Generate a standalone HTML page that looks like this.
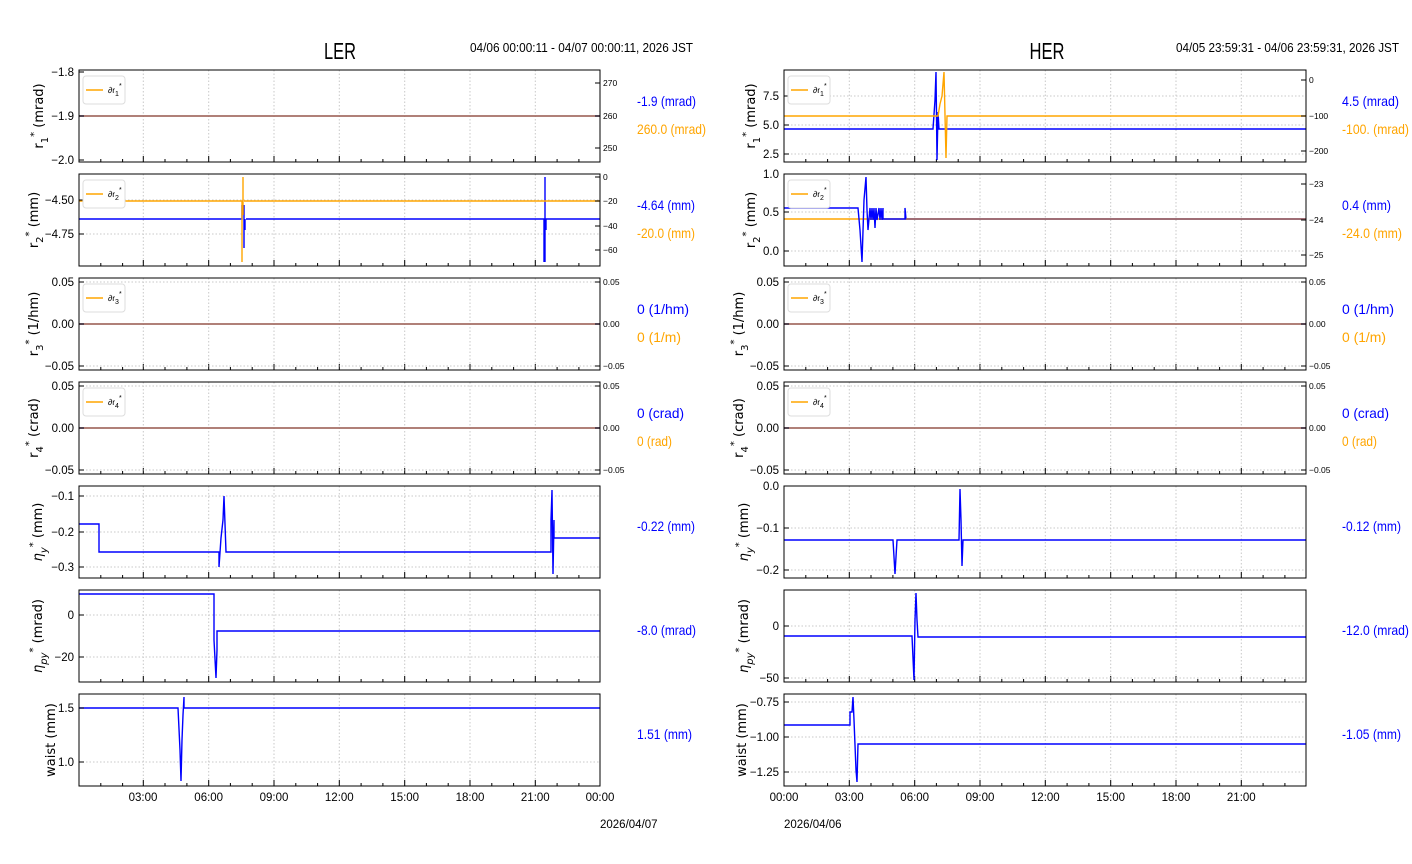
<!DOCTYPE html>
<html><head><meta charset="utf-8"><style>
body{margin:0;background:#fff;width:1412px;height:864px;overflow:hidden}
svg{display:block}
text{font-family:"Liberation Sans",sans-serif;fill:#000}
.t{font-size:11.5px}
.s{font-size:8.5px}
.yl{font-family:"DejaVu Sans","Liberation Sans",sans-serif;font-size:13px}
.v{font-size:14px}
.b{fill:#0000ff}.o{fill:#ffa500}
.gr{stroke:#c8c8c8;stroke-width:1;stroke-dasharray:1.5,2;fill:none}
.fr{fill:none;stroke:#000;stroke-width:1}
.bl{fill:none;stroke:#0000ff;stroke-width:1.4}
.or{fill:none;stroke:#ffa500;stroke-width:1.4}
</style></head><body>
<svg width="1412" height="864" viewBox="0 0 1412 864">
<defs>
<g id="gL">
<path class="gr" d="M143.3 0V92M208.7 0V92M274 0V92M339.3 0V92M404.7 0V92M470 0V92M535.3 0V92"/>
<path stroke="#000" d="M143.3 92v-6M208.7 92v-6M274 92v-6M339.3 92v-6M404.7 92v-6M470 92v-6M535.3 92v-6M100.8 92v-3M122.6 92v-3M165 92v-3M186.9 92v-3M230.4 92v-3M252.2 92v-3M295.8 92v-3M317.6 92v-3M361.1 92v-3M382.9 92v-3M426.4 92v-3M448.2 92v-3M491.8 92v-3M513.6 92v-3M557.1 92v-3M578.9 92v-3"/>
</g>
<g id="gR">
<path class="gr" d="M849.3 0V92M914.7 0V92M980 0V92M1045.3 0V92M1110.7 0V92M1176 0V92M1241.3 0V92"/>
<path stroke="#000" d="M849.3 92v-6M914.7 92v-6M980 92v-6M1045.3 92v-6M1110.7 92v-6M1176 92v-6M1241.3 92v-6M805.8 92v-3M827.6 92v-3M871 92v-3M892.9 92v-3M936.4 92v-3M958.2 92v-3M1001.8 92v-3M1023.6 92v-3M1067.1 92v-3M1088.9 92v-3M1132.4 92v-3M1154.2 92v-3M1197.8 92v-3M1219.6 92v-3M1263.1 92v-3M1284.9 92v-3"/>
</g>
</defs>

<text x="340" y="59" text-anchor="middle" style="font-size:23px" textLength="32" lengthAdjust="spacingAndGlyphs">LER</text>
<text x="470" y="52" style="font-size:13px" textLength="223" lengthAdjust="spacingAndGlyphs">04/06 00:00:11 - 04/07 00:00:11, 2026 JST</text>
<text x="1047" y="59" text-anchor="middle" style="font-size:23px" textLength="35" lengthAdjust="spacingAndGlyphs">HER</text>
<text x="1176" y="52" style="font-size:13px" textLength="223" lengthAdjust="spacingAndGlyphs">04/05 23:59:31 - 04/06 23:59:31, 2026 JST</text>

<!-- P1 -->
<use href="#gL" y="70"/>
<path class="gr" d="M79 116H600"/>
<path class="bl" d="M79 116H600"/><path class="or" style="opacity:.7" d="M79 116H600"/>
<rect class="fr" x="79" y="70" width="521" height="92"/>
<path stroke="#000" d="M79 72h5M79 116h5M79 160h5M600 83h-5M600 116h-5M600 148h-5"/>
<text class="t" x="74" y="76" text-anchor="end">−1.8</text>
<text class="t" x="74" y="120" text-anchor="end">−1.9</text>
<text class="t" x="74" y="164" text-anchor="end">−2.0</text>
<text class="s" x="603" y="86">270</text><text class="s" x="603" y="119">260</text><text class="s" x="603" y="151">250</text>
<rect x="83" y="76" width="42" height="28" rx="3" fill="#fff" stroke="#ddd"/>
<path class="or" stroke-width="2" d="M86 90h17"/><text class="s" x="108" y="93">∂r<tspan dy="3" font-size="7">1</tspan><tspan dy="-8" font-size="7">*</tspan></text>
<text class="yl" transform="translate(43 116) rotate(-90)" text-anchor="middle">r<tspan dy="5" font-size="10">1</tspan><tspan dy="-11" font-size="10">*</tspan><tspan dy="6"> (mrad)</tspan></text>
<text class="v b" x="637" y="106" textLength="59" lengthAdjust="spacingAndGlyphs">-1.9 (mrad)</text><text class="v o" x="637" y="134" textLength="69" lengthAdjust="spacingAndGlyphs">260.0 (mrad)</text>

<!-- P2 -->
<use href="#gL" y="174"/>
<path class="gr" d="M79 200H600M79 234H600"/>
<path class="bl" d="M79 219H242V205M244 205V248M245 219V230M246 219H544V262M545 177V262M546 230V219H600"/>
<path class="or" d="M79 201H242V262M243 177V215M244 201H600"/>
<rect class="fr" x="79" y="174" width="521" height="92"/>
<path stroke="#000" d="M79 200h5M79 234h5M600 177h-5M600 201h-5M600 226h-5M600 250h-5"/>
<text class="t" x="74" y="204" text-anchor="end">−4.50</text>
<text class="t" x="74" y="238" text-anchor="end">−4.75</text>
<text class="s" x="603" y="180">0</text><text class="s" x="603" y="204">−20</text><text class="s" x="603" y="229">−40</text><text class="s" x="603" y="253">−60</text>
<rect x="83" y="180" width="42" height="28" rx="3" fill="#fff" stroke="#ddd"/>
<path class="or" stroke-width="2" d="M86 194h17"/><text class="s" x="108" y="197">∂r<tspan dy="3" font-size="7">2</tspan><tspan dy="-8" font-size="7">*</tspan></text>
<text class="yl" transform="translate(38 220) rotate(-90)" text-anchor="middle">r<tspan dy="5" font-size="10">2</tspan><tspan dy="-11" font-size="10">*</tspan><tspan dy="6"> (mm)</tspan></text>
<text class="v b" x="637" y="210" textLength="58" lengthAdjust="spacingAndGlyphs">-4.64 (mm)</text><text class="v o" x="637" y="238" textLength="58" lengthAdjust="spacingAndGlyphs">-20.0 (mm)</text>

<!-- P3 -->
<use href="#gL" y="278"/>
<path class="gr" d="M79 282H600M79 366H600"/>
<path class="bl" d="M79 324H600"/><path class="or" style="opacity:.7" d="M79 324H600"/>
<rect class="fr" x="79" y="278" width="521" height="92"/>
<path stroke="#000" d="M79 282h5M79 324h5M79 366h5M600 282h-5M600 324h-5M600 366h-5"/>
<text class="t" x="74" y="286" text-anchor="end">0.05</text>
<text class="t" x="74" y="328" text-anchor="end">0.00</text>
<text class="t" x="74" y="370" text-anchor="end">−0.05</text>
<text class="s" x="603" y="285">0.05</text><text class="s" x="603" y="327">0.00</text><text class="s" x="603" y="369">−0.05</text>
<rect x="83" y="284" width="42" height="28" rx="3" fill="#fff" stroke="#ddd"/>
<path class="or" stroke-width="2" d="M86 298h17"/><text class="s" x="108" y="301">∂r<tspan dy="3" font-size="7">3</tspan><tspan dy="-8" font-size="7">*</tspan></text>
<text class="yl" transform="translate(38 324) rotate(-90)" text-anchor="middle">r<tspan dy="5" font-size="10">3</tspan><tspan dy="-11" font-size="10">*</tspan><tspan dy="6"> (1/hm)</tspan></text>
<text class="v b" x="637" y="314" textLength="52" lengthAdjust="spacingAndGlyphs">0 (1/hm)</text><text class="v o" x="637" y="342" textLength="44" lengthAdjust="spacingAndGlyphs">0 (1/m)</text>

<!-- P4 -->
<use href="#gL" y="382"/>
<path class="gr" d="M79 386H600M79 470H600"/>
<path class="bl" d="M79 428H600"/><path class="or" style="opacity:.7" d="M79 428H600"/>
<rect class="fr" x="79" y="382" width="521" height="92"/>
<path stroke="#000" d="M79 386h5M79 428h5M79 470h5M600 386h-5M600 428h-5M600 470h-5"/>
<text class="t" x="74" y="390" text-anchor="end">0.05</text>
<text class="t" x="74" y="432" text-anchor="end">0.00</text>
<text class="t" x="74" y="474" text-anchor="end">−0.05</text>
<text class="s" x="603" y="389">0.05</text><text class="s" x="603" y="431">0.00</text><text class="s" x="603" y="473">−0.05</text>
<rect x="83" y="388" width="42" height="28" rx="3" fill="#fff" stroke="#ddd"/>
<path class="or" stroke-width="2" d="M86 402h17"/><text class="s" x="108" y="405">∂r<tspan dy="3" font-size="7">4</tspan><tspan dy="-8" font-size="7">*</tspan></text>
<text class="yl" transform="translate(38 428) rotate(-90)" text-anchor="middle">r<tspan dy="5" font-size="10">4</tspan><tspan dy="-11" font-size="10">*</tspan><tspan dy="6"> (crad)</tspan></text>
<text class="v b" x="637" y="418" textLength="47" lengthAdjust="spacingAndGlyphs">0 (crad)</text><text class="v o" x="637" y="446" textLength="35" lengthAdjust="spacingAndGlyphs">0 (rad)</text>

<!-- P5 -->
<use href="#gL" y="486"/>
<path class="gr" d="M79 496H600M79 532H600M79 567H600"/>
<path class="bl" d="M79 524H99V552H219V567L221 538L223 520L224 496L226 552H551V520L552 490L553 574L554 520V538H600"/>
<rect class="fr" x="79" y="486" width="521" height="92"/>
<path stroke="#000" d="M79 496h5M79 532h5M79 567h5"/>
<text class="t" x="74" y="500" text-anchor="end">−0.1</text>
<text class="t" x="74" y="536" text-anchor="end">−0.2</text>
<text class="t" x="74" y="571" text-anchor="end">−0.3</text>
<text class="yl" transform="translate(42 532) rotate(-90)" text-anchor="middle"><tspan font-style="italic">η</tspan><tspan dy="5" font-size="10" font-style="italic">y</tspan><tspan dy="-11" font-size="10">*</tspan><tspan dy="6"> (mm)</tspan></text>
<text class="v b" x="637" y="531" textLength="58" lengthAdjust="spacingAndGlyphs">-0.22 (mm)</text>

<!-- P6 -->
<use href="#gL" y="590"/>
<path class="gr" d="M79 615H600M79 657H600"/>
<path class="bl" d="M79 594H214V640L216 678L217 650V631H600"/>
<rect class="fr" x="79" y="590" width="521" height="92"/>
<path stroke="#000" d="M79 615h5M79 657h5"/>
<text class="t" x="74" y="619" text-anchor="end">0</text>
<text class="t" x="74" y="661" text-anchor="end">−20</text>
<text class="yl" transform="translate(42 636) rotate(-90)" text-anchor="middle"><tspan font-style="italic">η</tspan><tspan dy="5" font-size="10" font-style="italic">py</tspan><tspan dy="-11" font-size="10">*</tspan><tspan dy="6"> (mrad)</tspan></text>
<text class="v b" x="637" y="635" textLength="59" lengthAdjust="spacingAndGlyphs">-8.0 (mrad)</text>

<!-- P7 -->
<use href="#gL" y="694"/>
<path class="gr" d="M79 708H600M79 762H600"/>
<path class="bl" d="M79 708H178L180 750L181 781L182 740L183 715L184 697V708H600"/>
<rect class="fr" x="79" y="694" width="521" height="92"/>
<path stroke="#000" d="M79 708h5M79 762h5"/>
<text class="t" x="74" y="712" text-anchor="end">1.5</text>
<text class="t" x="74" y="766" text-anchor="end">1.0</text>
<text class="yl" transform="translate(55 740) rotate(-90)" text-anchor="middle">waist (mm)</text>
<text class="v b" x="637" y="739" textLength="55" lengthAdjust="spacingAndGlyphs">1.51 (mm)</text>

<text class="t" x="143" y="801" text-anchor="middle">03:00</text>
<text class="t" x="208.7" y="801" text-anchor="middle">06:00</text>
<text class="t" x="274" y="801" text-anchor="middle">09:00</text>
<text class="t" x="339.3" y="801" text-anchor="middle">12:00</text>
<text class="t" x="404.7" y="801" text-anchor="middle">15:00</text>
<text class="t" x="470" y="801" text-anchor="middle">18:00</text>
<text class="t" x="535.3" y="801" text-anchor="middle">21:00</text>
<text class="t" x="600" y="801" text-anchor="middle">00:00</text>
<text class="t" x="600" y="828">2026/04/07</text>

<!-- R1 -->
<use href="#gR" y="70"/>
<path class="gr" d="M784 96H1306M784 125H1306M784 154H1306"/>
<path class="bl" d="M784 129H933L935 100L936 72L937 160L938 112L939 129H1306"/>
<path class="or" d="M784 116H938L940 104L942 96L944 72L946 158L947 116H1306"/>
<rect class="fr" x="784" y="70" width="522" height="92"/>
<path stroke="#000" d="M784 96h5M784 125h5M784 154h5M1306 80h-5M1306 116h-5M1306 151h-5"/>
<text class="t" x="779" y="100" text-anchor="end">7.5</text>
<text class="t" x="779" y="129" text-anchor="end">5.0</text>
<text class="t" x="779" y="158" text-anchor="end">2.5</text>
<text class="s" x="1309" y="83">0</text><text class="s" x="1309" y="119">−100</text><text class="s" x="1309" y="154">−200</text>
<rect x="788" y="76" width="42" height="28" rx="3" fill="#fff" stroke="#ddd"/>
<path class="or" stroke-width="2" d="M791 90h17"/><text class="s" x="813" y="93">∂r<tspan dy="3" font-size="7">1</tspan><tspan dy="-8" font-size="7">*</tspan></text>
<text class="yl" transform="translate(755 116) rotate(-90)" text-anchor="middle">r<tspan dy="5" font-size="10">1</tspan><tspan dy="-11" font-size="10">*</tspan><tspan dy="6"> (mrad)</tspan></text>
<text class="v b" x="1342" y="106" textLength="57" lengthAdjust="spacingAndGlyphs">4.5 (mrad)</text><text class="v o" x="1342" y="134" textLength="67" lengthAdjust="spacingAndGlyphs">-100. (mrad)</text>

<!-- R2 -->
<use href="#gR" y="174"/>
<path class="gr" d="M784 212H1306M784 251H1306"/>
<path class="or" d="M784 219H1306"/>
<path class="bl" d="M784 208H858L860 230L862 262L864 200L866 177L867 210L868 230L870 208L871 220L872 208L873 220L874 208L875 228L876 208L877 220L879 208L880 220L881 208L882 220L883 208V219H905V208L906 219H1306"/>
<path class="or" style="opacity:.6" d="M906 219H1306"/>
<rect class="fr" x="784" y="174" width="522" height="92"/>
<path stroke="#000" d="M784 174h5M784 212h5M784 251h5M1306 184h-5M1306 220h-5M1306 255h-5"/>
<text class="t" x="779" y="178" text-anchor="end">1.0</text>
<text class="t" x="779" y="216" text-anchor="end">0.5</text>
<text class="t" x="779" y="255" text-anchor="end">0.0</text>
<text class="s" x="1309" y="187">−23</text><text class="s" x="1309" y="223">−24</text><text class="s" x="1309" y="258">−25</text>
<rect x="788" y="180" width="42" height="28" rx="3" fill="#fff" stroke="#ddd"/>
<path class="or" stroke-width="2" d="M791 194h17"/><text class="s" x="813" y="197">∂r<tspan dy="3" font-size="7">2</tspan><tspan dy="-8" font-size="7">*</tspan></text>
<text class="yl" transform="translate(755 220) rotate(-90)" text-anchor="middle">r<tspan dy="5" font-size="10">2</tspan><tspan dy="-11" font-size="10">*</tspan><tspan dy="6"> (mm)</tspan></text>
<text class="v b" x="1342" y="210" textLength="49" lengthAdjust="spacingAndGlyphs">0.4 (mm)</text><text class="v o" x="1342" y="238" textLength="60" lengthAdjust="spacingAndGlyphs">-24.0 (mm)</text>

<!-- R3 -->
<use href="#gR" y="278"/>
<path class="gr" d="M784 282H1306M784 366H1306"/>
<path class="bl" d="M784 324H1306"/><path class="or" style="opacity:.7" d="M784 324H1306"/>
<rect class="fr" x="784" y="278" width="522" height="92"/>
<path stroke="#000" d="M784 282h5M784 324h5M784 366h5M1306 282h-5M1306 324h-5M1306 366h-5"/>
<text class="t" x="779" y="286" text-anchor="end">0.05</text>
<text class="t" x="779" y="328" text-anchor="end">0.00</text>
<text class="t" x="779" y="370" text-anchor="end">−0.05</text>
<text class="s" x="1309" y="285">0.05</text><text class="s" x="1309" y="327">0.00</text><text class="s" x="1309" y="369">−0.05</text>
<rect x="788" y="284" width="42" height="28" rx="3" fill="#fff" stroke="#ddd"/>
<path class="or" stroke-width="2" d="M791 298h17"/><text class="s" x="813" y="301">∂r<tspan dy="3" font-size="7">3</tspan><tspan dy="-8" font-size="7">*</tspan></text>
<text class="yl" transform="translate(743 324) rotate(-90)" text-anchor="middle">r<tspan dy="5" font-size="10">3</tspan><tspan dy="-11" font-size="10">*</tspan><tspan dy="6"> (1/hm)</tspan></text>
<text class="v b" x="1342" y="314" textLength="52" lengthAdjust="spacingAndGlyphs">0 (1/hm)</text><text class="v o" x="1342" y="342" textLength="44" lengthAdjust="spacingAndGlyphs">0 (1/m)</text>

<!-- R4 -->
<use href="#gR" y="382"/>
<path class="gr" d="M784 386H1306M784 470H1306"/>
<path class="bl" d="M784 428H1306"/><path class="or" style="opacity:.7" d="M784 428H1306"/>
<rect class="fr" x="784" y="382" width="522" height="92"/>
<path stroke="#000" d="M784 386h5M784 428h5M784 470h5M1306 386h-5M1306 428h-5M1306 470h-5"/>
<text class="t" x="779" y="390" text-anchor="end">0.05</text>
<text class="t" x="779" y="432" text-anchor="end">0.00</text>
<text class="t" x="779" y="474" text-anchor="end">−0.05</text>
<text class="s" x="1309" y="389">0.05</text><text class="s" x="1309" y="431">0.00</text><text class="s" x="1309" y="473">−0.05</text>
<rect x="788" y="388" width="42" height="28" rx="3" fill="#fff" stroke="#ddd"/>
<path class="or" stroke-width="2" d="M791 402h17"/><text class="s" x="813" y="405">∂r<tspan dy="3" font-size="7">4</tspan><tspan dy="-8" font-size="7">*</tspan></text>
<text class="yl" transform="translate(743 428) rotate(-90)" text-anchor="middle">r<tspan dy="5" font-size="10">4</tspan><tspan dy="-11" font-size="10">*</tspan><tspan dy="6"> (crad)</tspan></text>
<text class="v b" x="1342" y="418" textLength="47" lengthAdjust="spacingAndGlyphs">0 (crad)</text><text class="v o" x="1342" y="446" textLength="35" lengthAdjust="spacingAndGlyphs">0 (rad)</text>

<!-- R5 -->
<use href="#gR" y="486"/>
<path class="gr" d="M784 486H1306M784 528H1306M784 570H1306"/>
<path class="bl" d="M784 540H893L895 574L897 540H959L960 489L961 520L962 566L963 540H1306"/>
<rect class="fr" x="784" y="486" width="522" height="92"/>
<path stroke="#000" d="M784 486h5M784 528h5M784 570h5"/>
<text class="t" x="779" y="490" text-anchor="end">0.0</text>
<text class="t" x="779" y="532" text-anchor="end">−0.1</text>
<text class="t" x="779" y="574" text-anchor="end">−0.2</text>
<text class="yl" transform="translate(748 532) rotate(-90)" text-anchor="middle"><tspan font-style="italic">η</tspan><tspan dy="5" font-size="10" font-style="italic">y</tspan><tspan dy="-11" font-size="10">*</tspan><tspan dy="6"> (mm)</tspan></text>
<text class="v b" x="1342" y="531" textLength="59" lengthAdjust="spacingAndGlyphs">-0.12 (mm)</text>

<!-- R6 -->
<use href="#gR" y="590"/>
<path class="gr" d="M784 626H1306M784 678H1306"/>
<path class="bl" d="M784 636H912L914 680L915 620L916 593L917 620L918 637H1306"/>
<rect class="fr" x="784" y="590" width="522" height="92"/>
<path stroke="#000" d="M784 626h5M784 678h5"/>
<text class="t" x="779" y="630" text-anchor="end">0</text>
<text class="t" x="779" y="682" text-anchor="end">−50</text>
<text class="yl" transform="translate(748 636) rotate(-90)" text-anchor="middle"><tspan font-style="italic">η</tspan><tspan dy="5" font-size="10" font-style="italic">py</tspan><tspan dy="-11" font-size="10">*</tspan><tspan dy="6"> (mrad)</tspan></text>
<text class="v b" x="1342" y="635" textLength="67" lengthAdjust="spacingAndGlyphs">-12.0 (mrad)</text>

<!-- R7 -->
<use href="#gR" y="694"/>
<path class="gr" d="M784 702H1306M784 737H1306M784 772H1306"/>
<path class="bl" d="M784 725H850V712L852 712L853 697L854 720L856 770L857 782L858 744H1306"/>
<rect class="fr" x="784" y="694" width="522" height="92"/>
<path stroke="#000" d="M784 702h5M784 737h5M784 772h5"/>
<text class="t" x="779" y="706" text-anchor="end">−0.75</text>
<text class="t" x="779" y="741" text-anchor="end">−1.00</text>
<text class="t" x="779" y="776" text-anchor="end">−1.25</text>
<text class="yl" transform="translate(746 740) rotate(-90)" text-anchor="middle">waist (mm)</text>
<text class="v b" x="1342" y="739" textLength="59" lengthAdjust="spacingAndGlyphs">-1.05 (mm)</text>

<text class="t" x="784" y="801" text-anchor="middle">00:00</text>
<text class="t" x="849.3" y="801" text-anchor="middle">03:00</text>
<text class="t" x="914.7" y="801" text-anchor="middle">06:00</text>
<text class="t" x="980" y="801" text-anchor="middle">09:00</text>
<text class="t" x="1045.3" y="801" text-anchor="middle">12:00</text>
<text class="t" x="1110.7" y="801" text-anchor="middle">15:00</text>
<text class="t" x="1176" y="801" text-anchor="middle">18:00</text>
<text class="t" x="1241.3" y="801" text-anchor="middle">21:00</text>
<text class="t" x="784" y="828">2026/04/06</text>
</svg>
</body></html>
